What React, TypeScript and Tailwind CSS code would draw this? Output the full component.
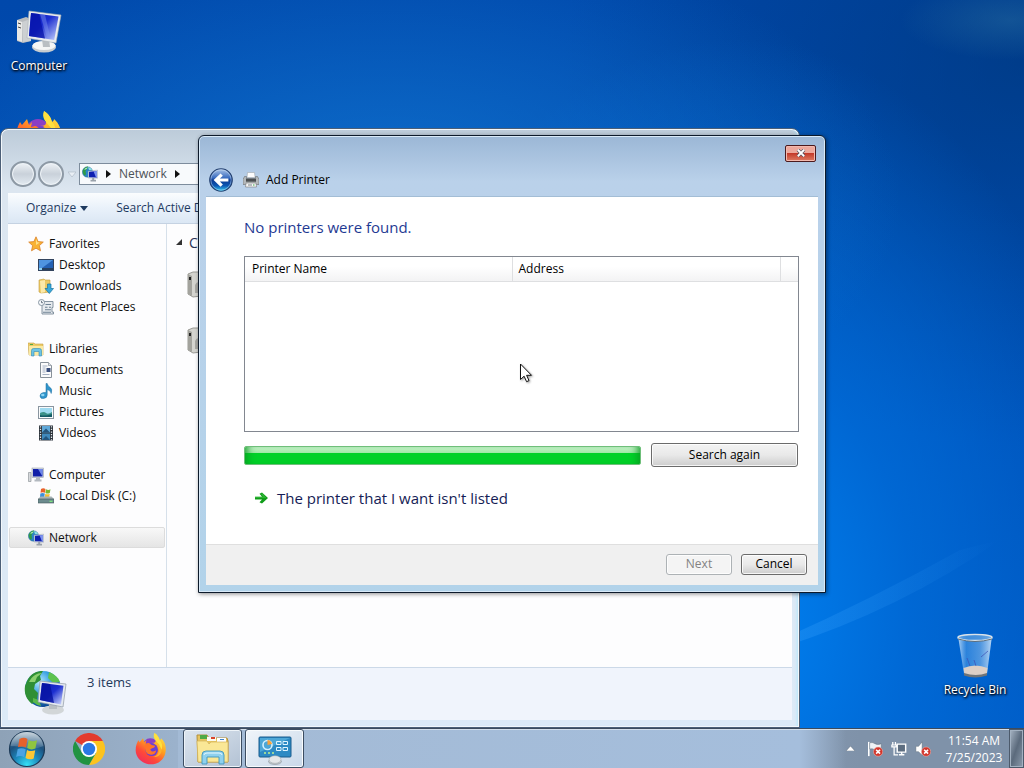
import type { ReactNode } from "react";

const FONT = "font-['Open_Sans','Noto_Sans',sans-serif]";

/* ---------- icons ---------- */

function ComputerLarge() {
  return (
    <svg className="h-12 w-12" viewBox="0 0 48 48" aria-hidden="true">
      <defs>
        <linearGradient id="scr" x1="0" y1="0" x2="1" y2="1">
          <stop offset="0" stopColor="#0a1ac0" />
          <stop offset=".45" stopColor="#1c2fd0" />
          <stop offset="1" stopColor="#c9d6ff" />
        </linearGradient>
      </defs>
      <path d="M2 12l9-3 5 2v22l-8 2-6-2z" fill="#b9bcbf" />
      <path d="M2 12l5 2v20l-5-2z" fill="#e8e8e6" />
      <path d="M7 14l9-3v22l-8 1z" fill="#cdd0d2" />
      <path d="M3 15l3 1M3 19l3 1" stroke="#444" strokeWidth="1" />
      <ellipse cx="29" cy="39" rx="12" ry="5.500" fill="#c9cdd0" />
      <ellipse cx="29" cy="37.500" rx="11.500" ry="4.500" fill="#f4f5f5" />
      <path d="M27 31h7l1 8h-7z" fill="#b9bec2" />
      <path d="M14 3l32 4-5 28-29-5z" fill="#e9ecee" stroke="#aab0b5" strokeWidth=".6" />
      <path d="M16 5l27.500 3.500L39.200 32 14 28z" fill="url(#scr)" />
      <path d="M16 5l8 1 6 24.500L14 28z" fill="#0613a8" opacity=".75" />
      <path d="M25 6l5 .7 5 21-3 2z" fill="#7f94f0" opacity=".45" />
    </svg>
  );
}

function GlobeLarge() {
  return (
    <svg className="h-12 w-12 shrink-0" viewBox="0 0 48 48" aria-hidden="true">
      <defs>
        <radialGradient id="gl" cx=".4" cy=".3" r=".7">
          <stop offset="0" stopColor="#b9ecff" />
          <stop offset=".5" stopColor="#2f9adf" />
          <stop offset="1" stopColor="#0c4a94" />
        </radialGradient>
        <linearGradient id="scr2" x1="0" y1="0" x2="1" y2="1">
          <stop offset="0" stopColor="#0a18b4" />
          <stop offset=".5" stopColor="#1c2fd0" />
          <stop offset="1" stopColor="#dbe3ff" />
        </linearGradient>
      </defs>
      <circle cx="20" cy="21" r="18" fill="url(#gl)" />
      <path d="M4 13C8 5 14 3 20 3l-3 5 1 4-6 4-1 5 4 4-1 6-5 5C3 31 1 25 2 18z" fill="#2f8f35" />
      <path d="M26 4c5 2 9 5 11 10l-7 1-5-5z" fill="#5cc24e" />
      <path d="M10 30l6 2 2 6q-5-1-8-4z" fill="#5bb84a" />
      <path d="M6 14c3-6 8-9 13-9l-5 4-2 5z" fill="#a2e07d" opacity=".8" />
      <ellipse cx="30" cy="42" rx="11" ry="4.500" fill="#d2d6d8" />
      <path d="M26 34h8v7h-8z" fill="#b9bfc3" />
      <path d="M17 13l26 3-3 23-25-5z" fill="#e4e9ef" stroke="#8f99a5" strokeWidth=".7" />
      <path d="M19 15l21.500 2.800L38 36.500 17 32z" fill="url(#scr2)" />
      <path d="M19 15l8 1 4 19-14-3z" fill="#0613a0" opacity=".8" />
    </svg>
  );
}

function Small({ children }: { children: ReactNode }) {
  return (
    <svg className="h-4 w-4 shrink-0" viewBox="0 0 16 16" aria-hidden="true">
      {children}
    </svg>
  );
}

const NetworkSmall = () => (
  <Small>
    <circle cx="5.500" cy="6" r="5.200" fill="#2b83c8" stroke="#2a6d8d" strokeWidth=".4" />
    <path d="M1 4q2-3.500 5-3.500L5 3 3.500 5 4 8l-1 2Q-.2 7.500 1 4z" fill="#2f9a48" />
    <path d="M6 1.200q3 0 4 2.800H7z" fill="#8fe0e0" />
    <path d="M2 3.500Q3.500 1.500 6 1.500L4 3.500z" fill="#b8f0c0" />
    <path d="M6.200 5l9.500-.8v8L6.200 12z" fill="#dfe5ee" stroke="#7f8a9c" strokeWidth=".4" />
    <path d="M7 5.700l8-.7v6.400l-8-.2z" fill="#0e1fb0" />
    <path d="M11.500 5.300L15 5v6.400h-1z" fill="#7d92ee" />
    <path d="M10.200 12h2v2h-2zM8.500 13.800h5.500v1.700H8.500z" fill="#9aa2ab" />
  </Small>
);
const StarIcon = () => (
  <Small>
    <path d="M8 .8l2.100 4.800 5.200.5-3.900 3.500 1.100 5.200L8 12.200l-4.500 2.600 1.100-5.200L.7 6.100l5.200-.5z" fill="#f9b233" stroke="#d9822b" strokeWidth=".8" />
    <path d="M8 2.800l1.300 3.500 2.500.3L8 9z" fill="#ffe08a" />
  </Small>
);
const DesktopIcon = () => (
  <Small>
    <rect x=".5" y="2.500" width="15" height="11" fill="#2461b4" stroke="#33445e" />
    <path d="M1 3h14L4 11H1z" fill="#4f94e0" />
    <rect x="1" y="11" width="14" height="2" fill="#27405f" />
    <rect x="1" y="11" width="3" height="2" fill="#8fd3f4" />
  </Small>
);
const DownloadsIcon = () => (
  <Small>
    <path d="M1 2l5-1 1 1h5v12l-9 1-2-1z" fill="#ecc965" stroke="#c29c3c" strokeWidth=".6" />
    <path d="M2 3l5-1v12l-4 1z" fill="#fbe9a9" />
    <path d="M9.500 6h3.500v4.500h2.500L11.300 15.500 7 10.500h2.500z" fill="#38a9dc" stroke="#19739f" strokeWidth=".7" />
  </Small>
);
const RecentIcon = () => (
  <Small>
    <path d="M4 2.500h11v6h-1v4.500h1.500v2H4z" fill="#e6eaee" stroke="#7b8a98" strokeWidth=".9" />
    <path d="M7.500 5.500h5.500M7 8.200h2.500M11 8.200h2M7 10.800h6M5 13.200h8" stroke="#6f8294" strokeWidth="1.100" />
    <circle cx="3.500" cy="3.500" r="3" fill="#f4f7fa" stroke="#7d8c9a" strokeWidth=".9" />
    <path d="M3.500 1.800v1.900H5" stroke="#4c5b69" strokeWidth=".8" fill="none" />
  </Small>
);
const LibrariesIcon = () => (
  <Small>
    <path d="M0 2h6l1 1h8v11H1z" fill="#edcb65" stroke="#c7a348" strokeWidth=".6" />
    <path d="M1 5h14v9H1z" fill="#fae9a2" />
    <path d="M2 3.500h3" stroke="#51a948" />
    <path d="M3.500 15V9.500q0-2 2-2h6q2 0 2 2V15h-2.500v-4.500h-5V15z" fill="#6cc3e6" stroke="#2f8cb5" strokeWidth=".6" />
  </Small>
);
const DocumentsIcon = () => (
  <Small>
    <path d="M2.500.5h8l3 3v12h-11z" fill="#fbfbfc" stroke="#88919a" />
    <path d="M10.500.5v3h3" fill="#dfe4e9" stroke="#88919a" strokeWidth=".7" />
    <path d="M4.500 4h5M4.500 6h3M4.500 8h3M4.500 10h3M4.500 12.500h7" stroke="#8e9db3" strokeWidth=".8" />
    <rect x="8.500" y="6" width="4" height="4" fill="#384d7c" />
  </Small>
);
const MusicIcon = () => (
  <Small>
    <path d="M8 .5h1.200q.5 2.500 3 4t1 6q-.3-3-4-4V12q0 3-3.500 3.500T2 13q0-3 3.500-3.500L8 9.500z" fill="#2f95cc" stroke="#1c6c9e" strokeWidth=".5" />
    <ellipse cx="4.800" cy="12" rx="1.700" ry="1.300" fill="#8fd4f4" />
  </Small>
);
const PicturesIcon = () => (
  <Small>
    <rect x=".5" y="2.500" width="15" height="12" fill="#fafbfb" stroke="#8995a0" />
    <rect x="2" y="4" width="12" height="9" fill="#9fdaf0" />
    <path d="M2 9q4-2 6 0t6-1v5H2z" fill="#3c9188" />
    <path d="M2 11q5 1.500 12-1v3H2z" fill="#155b66" />
  </Small>
);
const VideosIcon = () => (
  <Small>
    <rect x="1" y=".5" width="14" height="15" fill="#2a3138" />
    <rect x="4" y="1" width="8" height="6.500" fill="#5fa8d8" />
    <rect x="4" y="8.500" width="8" height="6.500" fill="#4089bc" />
    <path d="M4 7.500l4-4 4 4zM4 15l4-4 4 4z" fill="#24557d" />
    <path d="M2.500 1.200v14M13.500 1.200v14" stroke="#e6ebef" strokeWidth="1.300" strokeDasharray="1.300 1.300" />
  </Small>
);
const ComputerSmall = () => (
  <Small>
    <path d="M.5 5.500h2.500v9H.5z" fill="#d6d9dc" stroke="#83898f" strokeWidth=".6" />
    <rect x="4" y="1" width="11.500" height="9.500" fill="#d8dde4" stroke="#8a93a0" strokeWidth=".5" />
    <rect x="5" y="2" width="9.500" height="7.500" fill="#1220a8" />
    <path d="M10 2h4.500v7.500z" fill="#6f87ea" />
    <path d="M8 10.500h4v2H8zM6.500 12.500h7v2h-7z" fill="#b3b9c0" />
  </Small>
);
const DiskIcon = () => (
  <Small>
    <path d="M3 1q2.300-1.500 4.500 0L7 4.800q-2.200-1-4.500 0z" fill="#e9622b" />
    <path d="M8 1.300q2.300 1.200 4.500 0L11.800 5q-2.200 1-4.400 0z" fill="#79b832" />
    <path d="M2.300 5.500q2.200-1.200 4.500 0L6.300 9H2z" fill="#3c8fd9" />
    <path d="M7.300 5.700q2.200 1 4.400 0L11.200 9H6.800z" fill="#f5bd2e" />
    <path d="M2.500 8.500h11l2.500 2.500H0z" fill="#a7b3b5" />
    <path d="M0 11h16v4H0z" fill="#6c8b8e" stroke="#43585b" strokeWidth=".6" />
    <path d="M11.500 13.300h3" stroke="#7ef07c" strokeWidth="1.200" />
  </Small>
);
function Drive() {
  return (
    <svg className="h-8 w-8" viewBox="0 0 32 32" aria-hidden="true">
      <path d="M1 5l5-2h24v22l-24 3-5-3z" fill="#d4d4cf" stroke="#9a9a95" />
      <path d="M1 5l4 2v20l-4-2z" fill="#a3a39d" />
      <rect x="2" y="8" width="2" height="3" fill="#222" />
      <path d="M8 16q2-4 4-2v10H8z" fill="#a9a9a4" />
    </svg>
  );
}
const PrinterIcon = () => (
  <Small>
    <path d="M4.500 .5h7l.6 5H4z" fill="#fdfdfd" stroke="#a2a7ac" strokeWidth=".6" />
    <path d="M1.500 4.500h2V6.500h9V4.500h2L16 7.500v5H0v-5z" fill="#b4b8ba" stroke="#6c7073" strokeWidth=".6" />
    <path d="M3 6.700h10v3H3z" fill="#4b4f51" />
    <path d="M3 11h10l.5 4h-11z" fill="#f6f7f7" stroke="#777" strokeWidth=".6" />
    <path d="M5 13h4" stroke="#7b8287" />
    <path d="M10 13h1.500" stroke="#36a73c" />
  </Small>
);
function BackIcon() {
  return (
    <svg className="h-6 w-6" viewBox="0 0 26 26" aria-hidden="true">
      <defs>
        <linearGradient id="bk" x1="0" y1="0" x2="0" y2="1">
          <stop offset="0" stopColor="#aec6e8" />
          <stop offset=".4" stopColor="#3b6dc0" />
          <stop offset=".5" stopColor="#0b3a93" />
          <stop offset=".75" stopColor="#0d57b2" />
          <stop offset="1" stopColor="#39d0f6" />
        </linearGradient>
      </defs>
      <circle cx="13" cy="13" r="12.200" fill="url(#bk)" stroke="#24406f" strokeWidth="1.200" />
      <circle cx="13" cy="13" r="11" fill="none" stroke="#d0e4f7" strokeWidth=".7" opacity=".7" />
      <path d="M12.500 6l2.500 2.300-3.200 3.100H21v3.300h-9.200l3.200 3.100-2.500 2.400L5 13z" fill="#fff" />
    </svg>
  );
}
function GreenArrow() {
  return (
    <svg className="h-4 w-4 shrink-0" viewBox="0 0 16 16" aria-hidden="true">
      <path d="M2 6.800h7L6.500 3.800 9 2.500l6 5.500-6 5.500-2.500-1.300L9 9.500H2z" fill="#0f9d18" />
      <path d="M2 6.800h8L8 4l1.500-.8L13.500 8H2z" fill="#47c74a" opacity=".5" />
    </svg>
  );
}
function StartOrb() {
  return (
    <svg className="h-10 w-10" viewBox="0 0 40 40" aria-hidden="true">
      <defs>
        <radialGradient id="orb" cx=".5" cy=".95" r=".9">
          <stop offset="0" stopColor="#35e0f5" />
          <stop offset=".4" stopColor="#1c86ba" />
          <stop offset=".7" stopColor="#1d527f" />
          <stop offset="1" stopColor="#48708f" />
        </radialGradient>
        <linearGradient id="shine" x1="0" y1="0" x2="0" y2="1">
          <stop offset="0" stopColor="#fff" stopOpacity=".7" />
          <stop offset="1" stopColor="#fff" stopOpacity=".1" />
        </linearGradient>
      </defs>
      <circle cx="20" cy="20" r="17.500" fill="url(#orb)" stroke="#1c3a57" strokeWidth="1.200" />
      <path d="M3.500 17C5 7 12 3 20 3s15 4 16.500 14Q28 21 20 19T3.500 17z" fill="url(#shine)" />
      <path d="M12.500 10q4.500-2.500 8 0l-1.500 8.500q-3.800-2-8-.4z" fill="#e5622c" />
      <path d="M21.700 11q4 2.300 8.300.2l-1.600 8.400q-4.200 1.800-8.200-.5z" fill="#8fc640" />
      <path d="M10.700 19.900q4-1.700 8 .4l-1.500 8q-3.800-2.200-8-.4z" fill="#4ba3e4" />
      <path d="M20 20.900q4 2.200 8.200.4l-1.500 8.200q-4.200 1.900-8.200-.5z" fill="#fcc735" />
    </svg>
  );
}
function ChromeIcon() {
  return (
    <svg className="h-8 w-8" viewBox="0 0 48 48" aria-hidden="true">
      <path d="M24 24L3.200 12A24 24 0 0 1 44.800 12z" fill="#e33b2e" />
      <path d="M24 12h20.800A24 24 0 0 1 24 48l10.400-18z" fill="#fcc31e" />
      <path d="M13.600 30L3.200 12A24 24 0 0 0 24 48l10.400-18z" fill="#229342" />
      <circle cx="24" cy="24" r="12" fill="#fff" />
      <circle cx="24" cy="24" r="9.300" fill="#2b78e4" />
    </svg>
  );
}
function FirefoxIcon({ id, large }: { id: string; large?: boolean }) {
  return (
    <svg className={large ? "h-12 w-12" : "h-8 w-8"} viewBox="0 0 48 48" aria-hidden="true">
      <defs>
        <linearGradient id={id} x1=".85" y1="0" x2=".2" y2="1">
          <stop offset="0" stopColor="#ffee4a" />
          <stop offset=".4" stopColor="#ffa01f" />
          <stop offset=".7" stopColor="#ff4a38" />
          <stop offset="1" stopColor="#f02a60" />
        </linearGradient>
      </defs>
      <circle cx="23" cy="20" r="12" fill="#8b3fc4" />
      <path d="M29 0c5 3 7 7 8 11 2-1 2-3 2-3 5 4 8 11 7 19-1 12-10 20-22 20S1 38 1 26c0-7 2-11 4-15l2 3 5-6 2 6 3-3-1 5 8 1c8-1 9-6 5-17z" fill={`url(#${id})`} />
      <circle cx="25" cy="25" r="9.500" fill="#6b3fd4" />
      <path d="M15 21c-1-4 2-6 6-6l4 3 5 1c0 4-6 3-7 6 2 4 6 3 9 1-1 6-7 8-11 6-4-1-6-6-6-11z" fill="#ff7428" />
      <path d="M25 14c7 0 11 5 11 11s-4 10-9 11c7 1 13-4 13-11 0-6-6-12-15-11z" fill="#ffb02c" />
      <path d="M29 0c-3 7 2 11 7 17l4 8c2-6 0-11-3-14-1-4-3-8-8-11z" fill="#ffe03f" />
    </svg>
  );
}
function ExplorerIcon() {
  return (
    <svg className="h-8 w-9" viewBox="0 0 36 32" aria-hidden="true">
      <path d="M2 2h10l2 3h18l1 3v21H3z" fill="#e8c661" stroke="#b38f3b" />
      <path d="M5 2h7v4H5z" fill="#4faa45" />
      <path d="M12 4h9v4h-9z" fill="#fbfaf0" />
      <path d="M16 4h4v2h-4z" fill="#d9442b" />
      <path d="M22 5h9v4h-9z" fill="#fff" />
      <path d="M25 6h4v1h-4z" fill="#3e83cc" />
      <path d="M2 8h10l2 3 2-2h17v20H3z" fill="#fae796" stroke="#d3b35a" strokeWidth=".7" />
      <path d="M7 31V22q0-4 4-4h14q4 0 4 4v9h-5v-7H12v7z" fill="#8fd1ee" stroke="#3f96bd" strokeWidth=".9" />
      <path d="M9 22q0-2 3-2h12q3 0 3 2" stroke="#e5f8ff" fill="none" />
    </svg>
  );
}
function ControlPanelIcon() {
  return (
    <svg className="h-8 w-9" viewBox="0 0 36 32" aria-hidden="true">
      <rect x="2" y="4" width="32" height="20" rx="1" fill="#2d8ac4" stroke="#1b5c8d" />
      <path d="M3 5h30L3 19z" fill="#5bb4e0" opacity=".7" />
      <circle cx="10.500" cy="12" r="4.500" fill="none" stroke="#d4f1ff" strokeWidth="1.600" />
      <path d="M10.500 12V7a5 5 0 0 1 4.500 4z" fill="#f8a13b" />
      <path d="M19.500 8.500h4.500v3h-4.500zM26 8.500h4.500v3H26zM19.500 14.500h4.500v3h-4.500zM26 14.500h4.500v3H26z" fill="none" stroke="#e1f5ff" />
      <path d="M7 20h2M11 20h2M15 20h2" stroke="#bdf08f" strokeWidth="1.500" />
      <ellipse cx="18" cy="28.500" rx="6.500" ry="3" fill="#c3c9cd" stroke="#8b949b" strokeWidth=".6" />
      <ellipse cx="18" cy="26.500" rx="6" ry="3.800" fill="#e4e7e9" stroke="#9da5ab" strokeWidth=".5" />
    </svg>
  );
}
function RecycleBin() {
  return (
    <svg className="h-12 w-12" viewBox="0 0 48 48" aria-hidden="true">
      <defs>
        <linearGradient id="bin" x1="0" y1="0" x2="1" y2="0">
          <stop offset="0" stopColor="#dff0ff" stopOpacity=".8" />
          <stop offset=".25" stopColor="#6fb2ee" stopOpacity=".4" />
          <stop offset=".65" stopColor="#9cc9f2" stopOpacity=".5" />
          <stop offset="1" stopColor="#eaf5ff" stopOpacity=".8" />
        </linearGradient>
      </defs>
      <path d="M7 4h34l-5 38q-12 4-23 0z" fill="url(#bin)" />
      <path d="M12.500 36q12-5 24 0l-.7 6q-12 4-22.500 0z" fill="#dccfc6" />
      <path d="M13 41q12 4 23 0v2.500q-12 4-23 0z" fill="#6f7478" />
      <path d="M16 26l3 8M30 25l7-6M23 28l2 6" stroke="#3d4fb4" strokeWidth="1" opacity=".7" fill="none" />
      <ellipse cx="24" cy="5.500" rx="17" ry="3" fill="#4b94dc" fillOpacity=".6" stroke="#d9e3ea" strokeWidth="1.500" />
      <path d="M7 7q17 5 34 0" stroke="#5c6e7d" strokeWidth="1" fill="none" />
    </svg>
  );
}
const RedX = () => (
  <g>
    <circle cx="12.500" cy="12" r="5.200" fill="#d2352b" stroke="#f3b5ae" strokeWidth=".6" />
    <path d="M10.300 9.800l4.400 4.400M14.700 9.800l-4.400 4.400" stroke="#fff" strokeWidth="1.800" />
  </g>
);
function TrayIcon({ children }: { children: ReactNode }) {
  return (
    <svg className="h-4 w-4" viewBox="0 0 18 18" aria-hidden="true">
      {children}
    </svg>
  );
}
function NavButton({ label }: { label: string }) {
  return (
    <button
      aria-label={label}
      className="h-[26px] w-[26px] rounded-full border-2 border-[#8d99a5] bg-linear-to-b from-[#eef2f6] via-[#c9d1da] to-[#e2eaf1] shadow-[inset_0_0_0_1px_#eef3f7]"
    />
  );
}

/* ---------- explorer window ---------- */

type Item = { label: string; icon: ReactNode; child?: boolean };
const groups: Item[][] = [
  [
    { label: "Favorites", icon: <StarIcon /> },
    { label: "Desktop", icon: <DesktopIcon />, child: true },
    { label: "Downloads", icon: <DownloadsIcon />, child: true },
    { label: "Recent Places", icon: <RecentIcon />, child: true },
  ],
  [
    { label: "Libraries", icon: <LibrariesIcon /> },
    { label: "Documents", icon: <DocumentsIcon />, child: true },
    { label: "Music", icon: <MusicIcon />, child: true },
    { label: "Pictures", icon: <PicturesIcon />, child: true },
    { label: "Videos", icon: <VideosIcon />, child: true },
  ],
  [
    { label: "Computer", icon: <ComputerSmall /> },
    { label: "Local Disk (C:)", icon: <DiskIcon />, child: true },
  ],
  [{ label: "Network", icon: <NetworkSmall /> }],
];

function NavTree() {
  return (
    <nav className="flex w-[159px] shrink-0 flex-col gap-[21px] border-r border-[#d6e0ea] pt-[9px] pr-px pl-px text-[12px] text-[#101010]">
      {groups.map((g) => (
        <ul key={g[0].label}>
          {g.map((it) => {
            const active = it.label === "Network";
            return (
              <li key={it.label}>
                <a
                  href="#"
                  className={
                    "flex h-[21px] items-center gap-[5px] rounded-xs border whitespace-nowrap " +
                    (it.child ? "pl-7 " : "pl-[18px] ") +
                    (active ? "border-[#dcdcdc] bg-linear-to-b from-[#f8f8f8] to-[#e5e5e5]" : "border-transparent")
                  }
                >
                  {it.icon}
                  {it.label}
                </a>
              </li>
            );
          })}
        </ul>
      ))}
    </nav>
  );
}

function Caret() {
  return (
    <svg className="h-2 w-[5px]" viewBox="0 0 5 8" aria-hidden="true">
      <path d="M0 0l5 4-5 4z" fill="#111" />
    </svg>
  );
}

function ExplorerWindow() {
  return (
    <section
      aria-label="Network"
      className="absolute top-[128px] bottom-0 left-0 flex w-[800px] flex-col rounded-t-lg border border-[#4c5f77] bg-linear-to-b from-[#bccbd9] via-[#dce6f0] via-10% to-[#dceaf7] px-[7px] pb-[7px] shadow-[inset_0_0_0_1px_#f2f7fb,inset_-3px_0_3px_-1px_#b5e6fb]"
    >
      <div className="flex h-16 items-center gap-[2px] pt-[26px]">
        <div className="flex gap-[2px] pl-[2px]">
          <NavButton label="Back" />
          <NavButton label="Forward" />
        </div>
        <svg className="ml-[2px] h-[6px] w-2" viewBox="0 0 8 6" aria-hidden="true">
          <path d="M0 1h8L4 6z" fill="#e9eff5" stroke="#aab6c2" strokeWidth=".6" />
        </svg>
        <div className="ml-[1px] flex h-[22px] flex-1 items-center gap-2 border border-[#7d8c9c] bg-[#f8fafc] pl-[2px] text-[12px] text-[#4c5258]">
          <NetworkSmall />
          <Caret />
          <span>Network</span>
          <Caret />
        </div>
      </div>
      <div className="flex h-[31px] items-center gap-7 border-b border-[#c5d2e2] bg-linear-to-b from-[#fbfdfe] via-[#e9f1fa] to-[#dbe7f4] pl-[18px] text-[12px] text-[#1e3a5f]">
        <button className="flex items-center gap-1">
          Organize
          <svg className="h-[5px] w-2" viewBox="0 0 8 5" aria-hidden="true">
            <path d="M0 0h8L4 5z" fill="#1e3a5f" />
          </svg>
        </button>
        <button className="whitespace-nowrap">Search Active Directory</button>
      </div>
      <div className="flex min-h-0 flex-1 overflow-hidden bg-[#fdfdfe]">
        <NavTree />
        <div className="flex-1 pt-2 pl-[9px]">
          <div className="flex h-5 items-center gap-[7px] text-[14px] text-[#2b3557]">
            <svg className="h-[6px] w-[6px]" viewBox="0 0 6 6" aria-hidden="true">
              <path d="M6 0v6H0z" fill="#333" />
            </svg>
            Computer (2)
          </div>
          <div className="flex flex-col gap-6 pt-[17px] pl-[11px]">
            <Drive />
            <Drive />
          </div>
        </div>
      </div>
      <footer className="flex h-[53px] shrink-0 gap-4 border-t border-[#ccd9e8] bg-[#f0f4fc] pl-[15px] text-[13px] text-[#1e395b]">
        <GlobeLarge />
        <p className="pt-[5px]">3 items</p>
      </footer>
    </section>
  );
}

/* ---------- dialog ---------- */

const BTN =
  "rounded-[3px] border text-[12px] shadow-[inset_0_0_0_1px_rgba(255,255,255,0.8)] ";
const BTN_ON = "border-[#6b6b6b] bg-linear-to-b from-[#f3f3f3] via-[#e9e9e9] via-50% to-[#cdcdcd] text-black ";

function Cursor() {
  return (
    <svg className="absolute top-[227px] left-[320px] h-5 w-[14px] drop-shadow-[1px_1px_1px_rgba(0,0,0,0.4)]" viewBox="0 0 14 20" aria-hidden="true">
      <path d="M1.500 1v15.500l3.600-3.300 2.500 5.500 2.400-1.100L7.600 12.300h4.900z" fill="#fff" stroke="#111" strokeWidth="1" />
    </svg>
  );
}

function AddPrinterDialog() {
  return (
    <section
      role="dialog"
      aria-label="Add Printer"
      className="absolute top-[135px] left-[198px] flex h-[458px] w-[628px] flex-col rounded-t-md border border-[#0d1a2b] bg-linear-to-b from-[#9bb7d6] via-[#bad1ea] via-10% to-[#b2d3ea] px-[7px] pb-[7px] shadow-[inset_0_0_0_1px_#d9eaf8,1px_1px_4px_rgba(0,0,0,0.45)]"
    >
      <div className="flex h-7 items-center justify-end pt-[6px] pr-[2px]">
        <button
          aria-label="Close"
          className="flex h-[17px] w-[31px] items-center justify-center rounded-xs border border-[#4b1a1d] bg-linear-to-b from-[#eda89c] from-45% via-[#c43a2a] via-50% to-[#dd7a63] shadow-[inset_0_0_0_1px_#f3b9ae]"
        >
          <svg className="h-2 w-[10px]" viewBox="0 0 12 10" aria-hidden="true">
            <path d="M2 1l8 8M10 1L2 9" stroke="#4c4c5c" strokeWidth="4" />
            <path d="M2 1l8 8M10 1L2 9" stroke="#fff" strokeWidth="2.400" />
          </svg>
        </button>
      </div>
      <header className="flex h-8 items-center pl-[3px] text-[12px] text-black">
        <button aria-label="Back">
          <BackIcon />
        </button>
        <span className="flex items-center gap-[7px] pl-[10px]">
          <PrinterIcon />
          Add Printer
        </span>
      </header>
      <div className="flex flex-1 flex-col border-t border-[#a3bdd5] bg-white">
        <div className="flex flex-1 flex-col pr-[19px] pl-[38px]">
          <h1 className="mt-[18px] text-[15px] leading-6 text-[#1f3a93]">No printers were found.</h1>
          <div className="mt-[17px] h-[176px] border border-[#828790]">
            <table className="w-full table-fixed border-collapse text-left text-[12px]">
              <thead>
                <tr className="h-6 bg-linear-to-b from-white from-40% to-[#f3f3f4]">
                  <th className="w-[267px] border-r border-b border-[#dedfe1] pl-[7px] font-normal">Printer Name</th>
                  <th className="w-[268px] border-r border-b border-[#dedfe1] pl-[6px] font-normal">Address</th>
                  <th className="border-b border-[#dedfe1]" aria-label="Filler" />
                </tr>
              </thead>
            </table>
          </div>
          <div className="mt-[11px] flex items-center gap-[10px] pr-px">
            <div
              role="progressbar"
              aria-label="Search progress"
              aria-valuenow={100}
              className="h-[19px] flex-1 rounded-xs border border-[#6fbf7a] bg-linear-to-b from-[#c9f3cb] from-5% via-[#9ce8a4] via-35% to-[#00d128] to-36% shadow-[inset_8px_0_8px_-6px_#0a9a22,inset_-8px_0_8px_-6px_#0a9a22]"
            />
            <button className={BTN + BTN_ON + "h-6 w-[147px]"}>Search again</button>
          </div>
          <a href="#" className="mt-[19px] flex items-center gap-2 self-start pl-[9px] text-[15px] leading-6 text-[#151c55]">
            <GreenArrow />
            The printer that I want isn&apos;t listed
          </a>
        </div>
        <footer className="flex h-[41px] items-center justify-end gap-[9px] border-t border-[#dfdfdf] bg-[#f0f0f0] pr-[11px] pb-[2px]">
          <button disabled className={BTN + "h-[21px] w-[66px] border-[#adb2b5] bg-[#f4f4f4] text-[#838383]"}>
            Next
          </button>
          <button className={BTN + BTN_ON + "h-[21px] w-[66px]"}>Cancel</button>
        </footer>
      </div>
      <Cursor />
    </section>
  );
}

/* ---------- desktop ---------- */

function Wallpaper() {
  return (
    <svg className="absolute inset-0 h-full w-full" viewBox="0 0 1024 728" preserveAspectRatio="none" aria-hidden="true">
      <defs>
        <linearGradient id="beam" x1="0" y1="0" x2="1" y2="0">
          <stop offset="0" stopColor="#3fa6ff" stopOpacity=".3" />
          <stop offset="1" stopColor="#3fa6ff" stopOpacity="0" />
        </linearGradient>
        <radialGradient id="haze">
          <stop offset="0" stopColor="#3d86a8" stopOpacity=".3" />
          <stop offset="1" stopColor="#3d86a8" stopOpacity="0" />
        </radialGradient>
      </defs>
      <path d="M780 640Q870 600 960 550L1000 540Q900 610 780 648z" fill="url(#beam)" />
      <ellipse cx="1010" cy="20" rx="110" ry="40" fill="url(#haze)" />
    </svg>
  );
}

function DesktopShortcut({ label, icon, place }: { label: string; icon: ReactNode; place: string }) {
  return (
    <a
      href="#"
      className={
        "absolute flex w-[76px] flex-col items-center gap-[2px] text-[12px] leading-4 whitespace-nowrap text-white [text-shadow:1px_1px_2px_#000,0_1px_3px_#001] " +
        place
      }
    >
      {icon}
      {label}
    </a>
  );
}

function Taskbar() {
  return (
    <footer className="flex h-10 shrink-0 items-stretch border-t border-[#3d4b5d] bg-linear-to-r from-[#8ea2b7] from-0% via-[#a5bedc] via-30% to-[#7f92a9] to-84% shadow-[inset_0_1px_0_#d3dfeb]">
      <button aria-label="Start" className="w-[54px] pl-[7px]">
        <StartOrb />
      </button>
      <button aria-label="Chrome" className="flex w-[70px] items-center justify-center">
        <ChromeIcon />
      </button>
      <button aria-label="Firefox" className="flex w-[54px] items-center justify-center">
        <FirefoxIcon id="ff-bar" />
      </button>
      <div className="flex flex-1 gap-[3px] bg-linear-to-r from-[#a3bad5] via-[#a5bedc] via-93% to-transparent pl-[5px] shadow-[inset_0_1px_0_#d3dfeb]">
        <button
          aria-label="Explorer"
          className="flex w-[59px] items-center justify-center rounded-[3px] border border-[#3c4d62] bg-linear-to-br from-[#dce5ef] to-[#b3c2d4] shadow-[inset_0_0_0_1px_#edf3f8]"
        >
          <ExplorerIcon />
        </button>
        <button
          aria-label="Add Printer"
          className="flex w-[59px] items-center justify-center rounded-[3px] border border-[#3c4d62] bg-linear-to-br from-[#f0f5fa] to-[#c9d8e9] shadow-[inset_0_0_0_1px_#f8fbfd]"
        >
          <ControlPanelIcon />
        </button>
      </div>
      <div className="flex items-center gap-2">
        <svg className="mr-1 h-[5px] w-[9px]" viewBox="0 0 9 5" aria-hidden="true">
          <path d="M0 5h9L4.500 0z" fill="#fff" stroke="#4f5d6c" strokeWidth=".4" />
        </svg>
        <TrayIcon>
          <path d="M2 1v16" stroke="#fff" strokeWidth="1.800" />
          <path d="M3 2q3-1 6 1t7 0v7q-4 2-7 0t-6-1z" fill="#eef2f6" stroke="#596675" strokeWidth=".5" />
          <RedX />
        </TrayIcon>
        <TrayIcon>
          <path d="M7 3.500h9.500v9H7z" fill="#5c6d80" stroke="#fff" strokeWidth="1.600" />
          <path d="M9 15.500h6M12 12.500v3" stroke="#fff" strokeWidth="1.600" />
          <path d="M2 1v3M5 1v3M1 4.500h5v2H1zM3.500 7v8.500H8" fill="none" stroke="#fff" strokeWidth="1.400" />
        </TrayIcon>
        <TrayIcon>
          <path d="M1 6h3l4-5v15l-4-4H1z" fill="#fff" stroke="#596675" strokeWidth=".5" />
          <RedX />
        </TrayIcon>
      </div>
      <div className="flex w-[78px] flex-col justify-center pl-2 text-center text-[12px] leading-[17px] whitespace-nowrap text-white">
        <time>11:54 AM</time>
        <time>7/25/2023</time>
      </div>
      <button
        aria-label="Show desktop"
        className="w-[15px] border border-[#4c5a6b] bg-linear-to-br from-[#a8b5c4] via-[#5b6a7c] to-[#8d9cad] shadow-[inset_0_0_0_1px_#a3b1c1]"
      />
    </footer>
  );
}

export default function App() {
  return (
    <div
      className={
        FONT +
        " flex h-screen flex-col overflow-hidden bg-[radial-gradient(ellipse_50%_35%_at_38%_26%,rgba(20,125,215,0.7),transparent),radial-gradient(ellipse_38%_75%_at_72%_80%,#0082f2,rgba(0,112,222,0.7)_45%,transparent),radial-gradient(ellipse_45%_50%_at_100%_8%,rgba(0,50,110,0.55),transparent),linear-gradient(#0048ab,#0058c2)]"
      }
    >
      <main className="relative min-h-0 flex-1">
        <Wallpaper />
        <DesktopShortcut label="Computer" icon={<ComputerLarge />} place="top-2 left-px" />
        <DesktopShortcut label="" icon={<FirefoxIcon id="ff-desk" large />} place="top-[111px] left-px" />
        <DesktopShortcut label="Recycle Bin" icon={<RecycleBin />} place="right-[11px] bottom-[30px]" />
        <ExplorerWindow />
        <AddPrinterDialog />
      </main>
      <Taskbar />
    </div>
  );
}
